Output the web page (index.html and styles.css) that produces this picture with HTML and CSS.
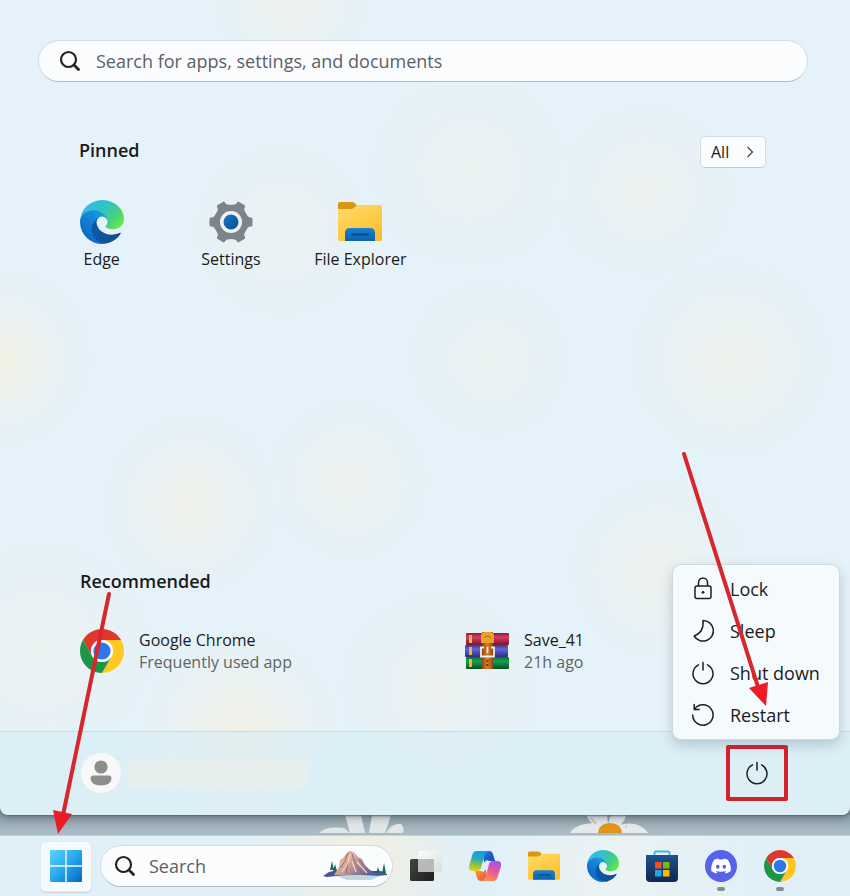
FILE: index.html
```html
<!DOCTYPE html>
<html lang="en">
<head>
<meta charset="utf-8">
<title>Start</title>
<meta name="viewport" content="width=device-width, initial-scale=1">
<link rel="stylesheet" href="styles.css">
</head>
<body>
<svg class="defs" aria-hidden="true">
  <defs>
    <linearGradient id="eA" x1="0.2" y1="0.5" x2="1" y2="0.5"><stop offset="0" stop-color="#0c59a4"/><stop offset="1" stop-color="#114a8b"/></linearGradient>
    <linearGradient id="eB" x1="0.9" y1="0.2" x2="0.2" y2="1"><stop offset="0" stop-color="#1b9de2"/><stop offset="0.4" stop-color="#1383d8"/><stop offset="1" stop-color="#0a62bd"/></linearGradient>
    <linearGradient id="eC" x1="0" y1="0.2" x2="1" y2="0.7"><stop offset="0" stop-color="#35b8ee"/><stop offset="0.45" stop-color="#30c2c8"/><stop offset="0.75" stop-color="#45cf82"/><stop offset="1" stop-color="#66e84e"/></linearGradient>
    <linearGradient id="fold" x1="0" y1="0" x2="0.7" y2="1"><stop offset="0" stop-color="#ffdc6c"/><stop offset="1" stop-color="#fcbf2c"/></linearGradient>
    <linearGradient id="foldB" x1="0" y1="0" x2="0" y2="1"><stop offset="0" stop-color="#1683d2"/><stop offset="1" stop-color="#0b62ad"/></linearGradient>
    <linearGradient id="gearB" x1="0" y1="0" x2="1" y2="1"><stop offset="0" stop-color="#1c79ca"/><stop offset="1" stop-color="#064a91"/></linearGradient>
    <linearGradient id="win" gradientUnits="userSpaceOnUse" x1="0" y1="0" x2="32" y2="32"><stop offset="0" stop-color="#5fd3fb"/><stop offset="0.5" stop-color="#25a8ee"/><stop offset="1" stop-color="#0565c4"/></linearGradient>
    <linearGradient id="store" x1="0" y1="0" x2="0" y2="1"><stop offset="0" stop-color="#1d5290"/><stop offset="1" stop-color="#0e2750"/></linearGradient>
    <linearGradient id="tvD" x1="0" y1="0" x2="1" y2="1"><stop offset="0" stop-color="#454545"/><stop offset="1" stop-color="#1d1d1d"/></linearGradient>
    <linearGradient id="tvL" x1="0" y1="0" x2="1" y2="1"><stop offset="0" stop-color="#ffffff"/><stop offset="1" stop-color="#d9d9d9"/></linearGradient>
    <linearGradient id="cpA" x1="0.5" y1="0" x2="0.3" y2="1"><stop offset="0" stop-color="#169be8"/><stop offset="0.4" stop-color="#2ba9b8"/><stop offset="0.7" stop-color="#8cc63c"/><stop offset="1" stop-color="#f2cd1d"/></linearGradient>
    <linearGradient id="cpB" x1="0.7" y1="0" x2="0.3" y2="1"><stop offset="0" stop-color="#a052ee"/><stop offset="0.5" stop-color="#ee5a94"/><stop offset="1" stop-color="#fb9445"/></linearGradient>
    <linearGradient id="cpC" x1="0" y1="0" x2="1" y2="1"><stop offset="0" stop-color="#1a7de0"/><stop offset="1" stop-color="#243fae"/></linearGradient>
    <linearGradient id="cpD" x1="0" y1="0" x2="1" y2="1"><stop offset="0" stop-color="#f4a62a"/><stop offset="1" stop-color="#ee4a4e"/></linearGradient>
    <linearGradient id="bR" x1="0" y1="0" x2="0" y2="1"><stop offset="0" stop-color="#8d1838"/><stop offset="0.35" stop-color="#d63d62"/><stop offset="1" stop-color="#7c1230"/></linearGradient>
    <linearGradient id="bB" x1="0" y1="0" x2="0" y2="1"><stop offset="0" stop-color="#3a3a91"/><stop offset="0.35" stop-color="#6266d4"/><stop offset="1" stop-color="#2c2c7c"/></linearGradient>
    <linearGradient id="bG" x1="0" y1="0" x2="0" y2="1"><stop offset="0" stop-color="#0e6a36"/><stop offset="0.35" stop-color="#16a34e"/><stop offset="1" stop-color="#064d24"/></linearGradient>
    <linearGradient id="belt" x1="0" y1="0" x2="1" y2="0"><stop offset="0" stop-color="#8c4812"/><stop offset="0.5" stop-color="#d98428"/><stop offset="1" stop-color="#8c4812"/></linearGradient>
    <linearGradient id="rock" x1="0" y1="0" x2="1" y2="0.7"><stop offset="0" stop-color="#b98a92"/><stop offset="0.35" stop-color="#e5b39a"/><stop offset="0.65" stop-color="#b18c93"/><stop offset="1" stop-color="#5b5c93"/></linearGradient>

    <symbol id="edge" viewBox="0 0 256 256">
      <path fill="url(#eA)" d="M231 190.500c-3.400 1.800-6.900 3.400-10.500 4.700a101.500 101.500 0 0 1-35.900 6.400c-47.300 0-88.500-32.500-88.500-74.300a31.500 31.500 0 0 1 16.400-27.300c-42.800 1.800-53.800 46.400-53.800 72.500 0 74 68.100 81.400 82.800 81.400 7.900 0 19.800-2.300 27-4.600l1.300-.4a128.300 128.300 0 0 0 66.600-52.800 4 4 0 0 0-5.400-5.600z"/>
      <path fill="url(#eB)" d="M105.700 241.400a79.200 79.200 0 0 1-22.700-21.300 80.700 80.700 0 0 1 29.500-120c3.200-1.500 8.500-4.100 15.600-4a32.400 32.400 0 0 1 25.700 13 31.900 31.900 0 0 1 6.300 18.700c0-.2 24.500-79.600-80-79.600-43.900 0-80 41.600-80 78.200a130.200 130.200 0 0 0 12.100 56 128 128 0 0 0 156.400 67 75.500 75.500 0 0 1-62.800-8z"/>
      <path fill="url(#eC)" d="M152.300 148.900c-.9 1-3.400 2.500-3.400 5.600 0 2.600 1.700 5.200 4.800 7.300 14.300 10 41.400 8.600 41.500 8.600a59.600 59.600 0 0 0 30.300-8.300 61.400 61.400 0 0 0 30.400-52.900c.3-22.400-8-37.300-11.300-43.900C223.500 23.900 177.700 0 128 0A128 128 0 0 0 0 126.200c.5-36.500 36.800-66 80-66 3.500 0 23.500.3 42 10a72.600 72.600 0 0 1 30.900 29.300c6.100 10.600 7.200 24.100 7.200 29.500s-2.700 13.300-7.800 19.900z"/>
    </symbol>
    <symbol id="chrome" viewBox="0 0 48 48">
      <path fill="#e0382c" d="M24 12H44.780A24 24 0 0 0 3.220 12L13.600 30A12 12 0 0 1 24 12z"/>
      <path fill="#fdc922" d="M34.390 30 24 48A24 24 0 0 0 44.780 12H24A12 12 0 0 1 34.390 30z"/>
      <path fill="#1e9447" d="M13.600 30 3.220 12A24 24 0 0 0 24 48L34.390 30A12 12 0 0 1 13.600 30z"/>
      <circle cx="24" cy="24" r="12" fill="#fff"/><circle cx="24" cy="24" r="9.400" fill="#2f76e8"/>
    </symbol>
    <symbol id="folder" viewBox="0 0 44 40">
      <path fill="#d8980f" d="M0 7V2Q0 0 2 0H14Q15.500 0 16.500 1L20 4.500 16 8H0z"/>
      <path fill="url(#fold)" d="M0 7H13Q15 7 16.500 5.500L18 4Q19 3 21 3H42Q44 3 44 5V37Q44 39 42 39H2Q0 39 0 37z"/>
      <path fill="url(#foldB)" d="M7 39V31Q7 26 12 26H32Q37 26 37 31V39z"/>
      <rect x="13" y="31.500" width="18" height="2" rx="1" fill="#084a8c"/>
    </symbol>
    <symbol id="power" viewBox="0 0 24 24">
      <path d="M7.500 3.800A10 10 0 1 0 16.500 3.800M12 1.500V9" fill="none" stroke="#1f1f1f" stroke-width="1.500" stroke-linecap="round"/>
    </symbol>
    <symbol id="search" viewBox="0 0 22 22">
      <circle cx="9.500" cy="9.500" r="7.500" fill="none" stroke="#222" stroke-width="2.200"/>
      <path d="M15 15 19.500 19.500" stroke="#222" stroke-width="2.800" stroke-linecap="round"/>
    </symbol>
    <path id="tooth" d="M35 11 39 16.500Q39.800 17.500 42 17.500Q43.500 17.500 43.500 19V25Q43.500 26.500 42 26.500Q39.800 26.500 39 27.500L35 33z"/>
  </defs>
</svg>

<main class="start">
  <form class="search-box search-main">
    <svg class="glass" aria-hidden="true"><use href="#search"/></svg>
    <input type="search" aria-label="Search apps" placeholder="Search for apps, settings, and documents">
  </form>

  <section class="pinned">
    <header class="section-head">
      <h2>Pinned</h2>
      <button class="all" type="button">All
        <svg viewBox="0 0 8 12" aria-hidden="true"><path d="M1.500 1 6.500 6 1.500 11" fill="none" stroke="#444" stroke-width="1.200"/></svg>
      </button>
    </header>
    <div class="tiles">
      <button class="tile" type="button"><svg aria-hidden="true"><use href="#edge"/></svg><span>Edge</span></button>
      <button class="tile" type="button">
        <svg viewBox="0 0 44 44" aria-hidden="true">
          <g fill="#7d848b">
            <circle cx="22" cy="22" r="17"/>
            <use href="#tooth"/><use href="#tooth" transform="rotate(60 22 22)"/><use href="#tooth" transform="rotate(120 22 22)"/><use href="#tooth" transform="rotate(180 22 22)"/><use href="#tooth" transform="rotate(240 22 22)"/><use href="#tooth" transform="rotate(300 22 22)"/>
          </g>
          <circle cx="22" cy="22" r="11" fill="#eef2f5"/><circle cx="22" cy="22" r="7.500" fill="url(#gearB)"/>
        </svg>
        <span>Settings</span>
      </button>
      <button class="tile" type="button"><svg aria-hidden="true"><use href="#folder"/></svg><span>File Explorer</span></button>
    </div>
  </section>

  <section class="recommended">
    <h2>Recommended</h2>
    <div class="rec-list">
      <a class="rec" href="#">
        <svg aria-hidden="true"><use href="#chrome"/></svg>
        <span><b>Google Chrome</b><small>Frequently used app</small></span>
      </a>
      <a class="rec" href="#">
        <svg viewBox="0 0 44 44" aria-hidden="true">
          <rect x="1" y="4" width="43" height="12" rx="1" fill="url(#bR)"/>
          <rect x="0" y="16" width="43" height="12" rx="1" fill="url(#bB)"/>
          <rect x="1" y="28" width="43" height="12" rx="1" fill="url(#bG)"/>
          <path d="M4 6h3v8H4zM4 18h3v8H4zM4 30h3v8H4z" fill="#e9b932"/>
          <rect x="17" y="3" width="11" height="37" fill="url(#belt)"/>
          <path d="M16 14V7Q16 3 20 3H25Q29 3 29 7V14z" fill="#eaa22c"/>
          <path d="M19 9q3.500-4 7 0" fill="none" stroke="#a0621a"/>
          <path d="M19 18.500h-3v9h13v-9h-3" fill="none" stroke="#efefef" stroke-width="1.800"/>
          <path d="M22.500 18v6" stroke="#f5f5f5" stroke-width="1.600"/><circle cx="22.500" cy="32" r="1" fill="#542706"/><circle cx="22.500" cy="36" r="1" fill="#542706"/>
        </svg>
        <span><b>Save_41</b><small>21h ago</small></span>
      </a>
    </div>
  </section>

  <footer class="account">
    <button class="user" type="button" aria-label="Account">
      <svg viewBox="0 0 40 40" aria-hidden="true"><circle cx="20" cy="20" r="20" fill="#f8f8f9"/><circle cx="20" cy="14" r="6.600" fill="#8e8e8e"/><path d="M12.500 22.500H27.500Q30.500 22.500 30.500 25.500Q29.500 32.500 20 32.500T9.500 25.500Q9.500 22.500 12.500 22.500z" fill="#8e8e8e"/></svg>
      <span class="user-name"></span>
    </button>
    <div class="power-wrap">
      <button class="power" type="button" aria-label="Power"><svg aria-hidden="true"><use href="#power"/></svg></button>
      <div class="menu" role="menu">
        <button type="button" role="menuitem"><svg viewBox="0 0 24 24" aria-hidden="true"><g fill="none" stroke="#1f1f1f" stroke-width="1.500"><rect x="4" y="9" width="16" height="12.500" rx="2"/><path d="M7.500 9V5.500a4.500 4.500 0 0 1 9 0V9"/></g><circle cx="12" cy="15.300" r="1.400" fill="#1f1f1f"/></svg>Lock</button>
        <button type="button" role="menuitem"><svg viewBox="0 0 24 24" aria-hidden="true"><path d="M12 1.500C12.800 9 9.500 14.500 3.200 17A10.300 10.300 0 1 0 12 1.500z" fill="none" stroke="#1f1f1f" stroke-width="1.500" stroke-linejoin="round"/></svg>Sleep</button>
        <button type="button" role="menuitem"><svg aria-hidden="true"><use href="#power"/></svg>Shut down</button>
        <button type="button" role="menuitem"><svg viewBox="0 0 24 24" aria-hidden="true"><path d="M1.700 12A10.200 10.200 0 1 0 3.800 5.800M3.200 1.500V6.500H8.200" fill="none" stroke="#1f1f1f" stroke-width="1.500" stroke-linecap="round" stroke-linejoin="round"/></svg>Restart</button>
      </div>
    </div>
  </footer>
</main>

<div class="wallpaper" aria-hidden="true">
  <svg viewBox="0 0 850 20" preserveAspectRatio="xMidYMid slice">
    <path fill="#e3e6e7" d="M319 18Q326 11 344 13L350 18zM345 0H361L365 18H350zM372 0H391Q388 10 385 18H369zM386 18Q391 8 401 9Q405 13 403 18z"/>
    <path fill="#e6e9ea" d="M570 18Q576 8 596 8L603 18zM586 0H607L608 9 598 13Q590 8 586 0zM608 9 611 0H626Q625 7 619 11zM617 18 620 10Q638 5 648 18z"/>
    <path d="M591 3l5 6M625 12l2-1" stroke="#dba9b7" stroke-width="1.300"/>
    <path fill="#e2941c" d="M598 18Q599 8 610 8T622 18z"/>
  </svg>
</div>

<nav class="taskbar" aria-label="Taskbar">
  <button class="start-btn" type="button" aria-label="Start"><svg viewBox="0 0 32 32" aria-hidden="true"><path fill="url(#win)" d="M1 0H15.300V15.300H0V1Q0 0 1 0zM16.700 0H31Q32 0 32 1V15.300H16.700zM0 16.700H15.300V32H1Q0 32 0 31zM16.700 16.700H32V31Q32 32 31 32H16.700z"/></svg></button>
  <form class="search-box search-task">
    <svg class="glass" aria-hidden="true"><use href="#search"/></svg>
    <input type="search" aria-label="Search" placeholder="Search">
    <svg class="scene" viewBox="0 0 64 32" aria-hidden="true">
      <path fill="#47549a" d="M0 26 6 22 15 20 22 17 50 21 58 21 64 24V25Q50 27 34 26T4 27z"/>
      <path fill="url(#rock)" d="M11 25 16 17 17 10 20 8 23 4 26 1 31 2 35 7 39 9 42 15 47 20 54 25 32 26z"/>
      <path fill="none" stroke="#7d6790" stroke-width="0.900" d="M25 3 22 11 17 18M29 4 32 13 38 22M25 12 23 23M36 9 40 16"/>
      <path fill="none" stroke="#f6d3ba" stroke-width="1.200" d="M27 4 25 13 19 22M29 11 33 22M34 12 44 23"/>
      <path fill="#1c6a59" d="M9 11 11 20H7zM12 14 14 21H10zM55 17 57 23H53zM61 13 63 23H59z"/>
      <path fill="#b5dcef" d="M14 26Q32 24 57 26L48 30H24z"/>
      <path d="M20 28H44" stroke="#e9c3b0"/>
    </svg>
  </form>
  <div class="apps">
    <button type="button" aria-label="Task view"><svg viewBox="0 0 32 32" aria-hidden="true"><rect x="0" y="9" width="24" height="22" rx="1.500" fill="url(#tvD)"/><rect x="8" y="1" width="24" height="21" rx="1.500" fill="url(#tvL)" opacity="0.900"/><path d="M8 9H24V22H9.500Q8 22 8 20.500z" fill="#b0b0b0" opacity="0.800"/></svg></button>
    <button type="button" aria-label="Copilot"><svg viewBox="0 0 32 32" aria-hidden="true"><path fill="url(#cpC)" d="M14 1H20Q23 1 24 4L26 11H20Q17 9 15 13z"/><path fill="url(#cpD)" d="M18 31H12Q9 31 8 28L6 21H12Q15 23 17 19z"/><path fill="url(#cpA)" d="M8 1H20Q16.500 2 15.500 5L12 18Q11 21 8 21H4Q-1 21 0 16L3 6Q4 1 8 1z"/><path fill="url(#cpB)" d="M24 31H12Q15.500 30 16.500 27L20 14Q21 11 24 11H28Q33 11 32 16L29 26Q28 31 24 31z"/></svg></button>
    <button type="button" aria-label="File Explorer"><svg aria-hidden="true"><use href="#folder"/></svg></button>
    <button type="button" aria-label="Edge"><svg aria-hidden="true"><use href="#edge"/></svg></button>
    <button type="button" aria-label="Microsoft Store"><svg viewBox="0 0 32 32" aria-hidden="true"><path d="M8.500 6V3Q8.500 1.500 10 1.500H22Q23.500 1.500 23.500 3V6" fill="none" stroke="#3bb8ea" stroke-width="1.800"/><path fill="url(#store)" d="M0 5H32V28Q32 32 28 32H4Q0 32 0 28z"/><path fill="#f25022" d="M9 12H15.500V18.500H9z"/><path fill="#7fba00" d="M17 12H23.500V18.500H17z"/><path fill="#21a5ec" d="M9 20H15.500V26.500H9z"/><path fill="#ffb900" d="M17 20H23.500V26.500H17z"/></svg></button>
    <button class="running" type="button" aria-label="Discord"><svg viewBox="0 0 32 32" aria-hidden="true"><circle cx="16" cy="16" r="16" fill="#5562ea"/><g transform="translate(6.200 6.200) scale(0.820)"><path fill="#fff" d="M20.317 4.370a19.790 19.790 0 0 0-4.885-1.515.074.074 0 0 0-.079.037c-.211.375-.445.865-.608 1.250-1.845-.276-3.680-.276-5.487 0-.164-.393-.406-.874-.618-1.250a.077.077 0 0 0-.079-.037 19.736 19.736 0 0 0-4.885 1.515.070.070 0 0 0-.032.028C.533 9.046-.319 13.580.099 18.058a.082.082 0 0 0 .031.056c2.053 1.508 4.041 2.423 5.993 3.029a.078.078 0 0 0 .084-.028c.462-.630.873-1.295 1.226-1.994a.076.076 0 0 0-.042-.106c-.653-.248-1.274-.550-1.872-.892a.077.077 0 0 1-.008-.128c.126-.094.252-.192.372-.291a.074.074 0 0 1 .078-.011c3.928 1.793 8.180 1.793 12.061 0a.074.074 0 0 1 .079.010c.120.099.246.198.373.292a.077.077 0 0 1-.007.128 12.299 12.299 0 0 1-1.873.891.077.077 0 0 0-.041.107c.360.698.772 1.363 1.225 1.993a.076.076 0 0 0 .084.029c1.961-.607 3.950-1.522 6.002-3.029a.077.077 0 0 0 .031-.055c.500-5.177-.838-9.674-3.549-13.660a.061.061 0 0 0-.031-.029zM8.020 15.331c-1.183 0-2.157-1.086-2.157-2.419s.956-2.419 2.157-2.419c1.211 0 2.176 1.095 2.157 2.419 0 1.333-.956 2.419-2.157 2.419zm7.975 0c-1.183 0-2.157-1.086-2.157-2.419s.955-2.419 2.157-2.419c1.211 0 2.176 1.095 2.157 2.419 0 1.333-.946 2.419-2.157 2.419z"/></g></svg></button>
    <button class="running" type="button" aria-label="Google Chrome"><svg aria-hidden="true"><use href="#chrome"/></svg></button>
  </div>
</nav>

<svg class="arrows" viewBox="0 0 850 896" aria-hidden="true">
  <g stroke="#d8262e" stroke-width="4" stroke-linecap="round"><path d="M109 594 63 815"/><path d="M684 454 759 690"/></g>
  <path fill="#ed1c24" d="M53 810 72 814 58 834zM749 688 768 682 766 706z"/>
</svg>
</body>
</html>
```

FILE: styles.css
```css
* { box-sizing: border-box; }

body {
  margin: 0;
  min-height: 100vh;
  position: relative;
  display: flex;
  flex-direction: column;
  background: linear-gradient(to top, #a8bbc5 61px, #a8bbc5 65px, #8b9ca5 82px);
  color: #1b1b1b;
  font-family: "Open Sans", "Noto Sans", sans-serif;
  font-size: 16px;
  line-height: 20px;
}

button, input {
  font: inherit;
  color: inherit;
  border: 0;
  padding: 0;
  background: none;
}

h2 {
  margin: 0;
  font-size: 18px;
  line-height: 24px;
  font-weight: 600;
}

.defs { position: absolute; width: 0; height: 0; }

/* Start panel */
.start {
  flex: 1;
  display: flex;
  flex-direction: column;
  position: relative;
  z-index: 1;
  padding-top: 40px;
  border-radius: 0 0 8px 8px;
  box-shadow: 0 1px 2px #5a6870, 0 3px 8px rgba(50, 65, 75, 0.4);
  background:
    radial-gradient(circle at 290px 0, rgba(244, 241, 228, 0.6), rgba(244, 241, 228, 0.3) 40px, transparent 80px),
    radial-gradient(circle at 470px 170px, rgba(244, 241, 228, 0.4), rgba(244, 241, 228, 0.2) 50px, transparent 100px),
    radial-gradient(circle at 645px 190px, rgba(244, 241, 228, 0.5), rgba(244, 241, 228, 0.2) 50px, transparent 90px),
    radial-gradient(circle at 280px 230px, rgba(244, 241, 228, 0.3), rgba(244, 241, 228, 0.2) 50px, transparent 90px),
    radial-gradient(circle at 0 360px, rgba(246, 240, 222, 0.8), rgba(244, 241, 228, 0.3) 50px, transparent 90px),
    radial-gradient(circle at 490px 360px, rgba(244, 241, 228, 0.4), rgba(244, 241, 228, 0.2) 40px, transparent 80px),
    radial-gradient(circle at 730px 360px, rgba(244, 241, 228, 0.6), rgba(244, 241, 228, 0.3) 50px, transparent 100px),
    radial-gradient(circle at 190px 505px, rgba(244, 241, 228, 0.7), rgba(244, 241, 228, 0.3) 50px, transparent 90px),
    radial-gradient(circle at 350px 480px, rgba(244, 241, 228, 0.5), rgba(244, 241, 228, 0.3) 40px, transparent 80px),
    radial-gradient(circle at 660px 570px, rgba(244, 241, 228, 0.5), rgba(244, 241, 228, 0.3) 50px, transparent 90px),
    radial-gradient(circle at 40px 650px, rgba(244, 241, 228, 0.4), rgba(244, 241, 228, 0.2) 60px, transparent 110px),
    radial-gradient(circle at 240px 730px, rgba(246, 240, 222, 0.7), rgba(244, 241, 228, 0.4) 50px, transparent 100px),
    radial-gradient(circle at 440px 690px, rgba(244, 241, 228, 0.5), rgba(244, 241, 228, 0.2) 50px, transparent 100px),
    #e5f2f9;
}

.search-box {
  display: flex;
  align-items: center;
  border: 1px solid #d2dce1;
  border-bottom-color: #b5bec3;
  border-radius: 21px;
  background: #fafcfe;
}

.search-box input {
  flex: 1;
  min-width: 0;
  outline: 0;
  font-size: 18px;
  line-height: 24px;
}

.search-box input::placeholder { color: #5d6164; opacity: 1; }

.search-main {
  height: 42px;
  margin: 0 42px 0 38px;
  padding: 0 20px;
  gap: 15px;
}

.glass { width: 22px; height: 22px; }

.pinned { flex: 1; padding-top: 54px; }

.section-head {
  display: flex;
  align-items: flex-start;
  justify-content: space-between;
  padding: 0 84px 0 79px;
}

.section-head h2 { padding-top: 2px; }

.all {
  display: flex;
  align-items: center;
  justify-content: space-between;
  width: 66px;
  height: 32px;
  padding: 0 11px 0 10px;
  border: 1px solid #d6dde1;
  border-bottom-color: #c2c9cc;
  border-radius: 5px;
  background: #fafcfe;
}

.all svg { width: 8px; height: 12px; }

.tiles {
  display: grid;
  grid-template-columns: repeat(6, 1fr);
  padding: 32px 37px 0;
}

.tile {
  display: flex;
  flex-direction: column;
  align-items: center;
  gap: 5px;
}

.tile svg { width: 44px; height: 44px; }

.recommended { padding: 0 0 58px 80px; }

.rec-list {
  display: grid;
  grid-template-columns: 1fr 1fr;
  margin-top: 36px;
}

.rec {
  display: flex;
  align-items: center;
  gap: 15px;
  color: inherit;
  text-decoration: none;
}

.rec svg { width: 44px; height: 44px; }
.rec b, .rec small { display: block; font-size: 16px; line-height: 22px; font-weight: 400; }
.rec small { color: #5e6467; }

.account {
  display: flex;
  align-items: center;
  justify-content: space-between;
  height: 84px;
  padding: 0 62px 2px 81px;
  border-top: 1px solid #cbd9df;
  border-radius: 0 0 8px 8px;
  background: rgba(212, 235, 245, 0.5);
}

.user { display: flex; align-items: center; gap: 7px; }
.user svg { width: 40px; height: 40px; }
.user-name { width: 180px; height: 30px; background: #e6efed; }

.power-wrap { position: relative; }

.power {
  display: grid;
  place-items: center;
  width: 62px;
  height: 56px;
  border: 4px solid #d2232d;
  border-radius: 2px;
}

.power svg, .menu svg { width: 24px; height: 24px; }

.menu {
  position: absolute;
  right: -52px;
  bottom: 61px;
  width: 168px;
  padding: 3px 0;
  border: 1px solid #cfd8dc;
  border-radius: 9px;
  background: #f5fafc;
  box-shadow: 0 5px 12px rgba(60, 80, 90, 0.25);
}

.menu button {
  display: flex;
  align-items: center;
  gap: 15px;
  width: 100%;
  height: 42px;
  padding-left: 18px;
  font-size: 18px;
  white-space: nowrap;
}

/* Desktop visible between the panel and the taskbar */
.wallpaper { height: 20px; }
.wallpaper svg { display: block; width: 100%; height: 20px; }

/* Taskbar */
.taskbar {
  display: flex;
  align-items: center;
  height: 61px;
  padding: 0 54px 0 40px;
  border-top: 1px solid #c6d2d8;
  background:
    radial-gradient(circle at 360px 20px, #f2efe0, transparent 110px),
    radial-gradient(circle at 620px 30px, #ebf2f2, transparent 140px),
    #e1f0f8;
}

.start-btn {
  display: grid;
  place-items: center;
  width: 52px;
  height: 51px;
  border: 1px solid #e3e9ec;
  border-radius: 5px;
  background: #f4fafd;
  box-shadow: 0 1px 1px #cbd5da;
}

.start-btn svg { width: 32px; height: 32px; }

.search-task {
  width: 293px;
  height: 42px;
  margin: 0 17px 0 8px;
  padding: 0 5px 0 13px;
  gap: 13px;
}

.scene { width: 64px; height: 32px; }

.apps { flex: 1; display: flex; justify-content: space-between; }
.apps button { position: relative; width: 32px; height: 32px; }
.apps svg { display: block; width: 32px; height: 32px; }

.running::after {
  content: "";
  position: absolute;
  left: 12px;
  top: 37px;
  width: 8px;
  height: 4px;
  border-radius: 2px;
  background: #858b8f;
}

/* Annotation arrows drawn over the whole screen */
.arrows {
  position: absolute;
  z-index: 2;
  top: 0;
  left: 0;
  width: 850px;
  height: 896px;
  pointer-events: none;
}
```
